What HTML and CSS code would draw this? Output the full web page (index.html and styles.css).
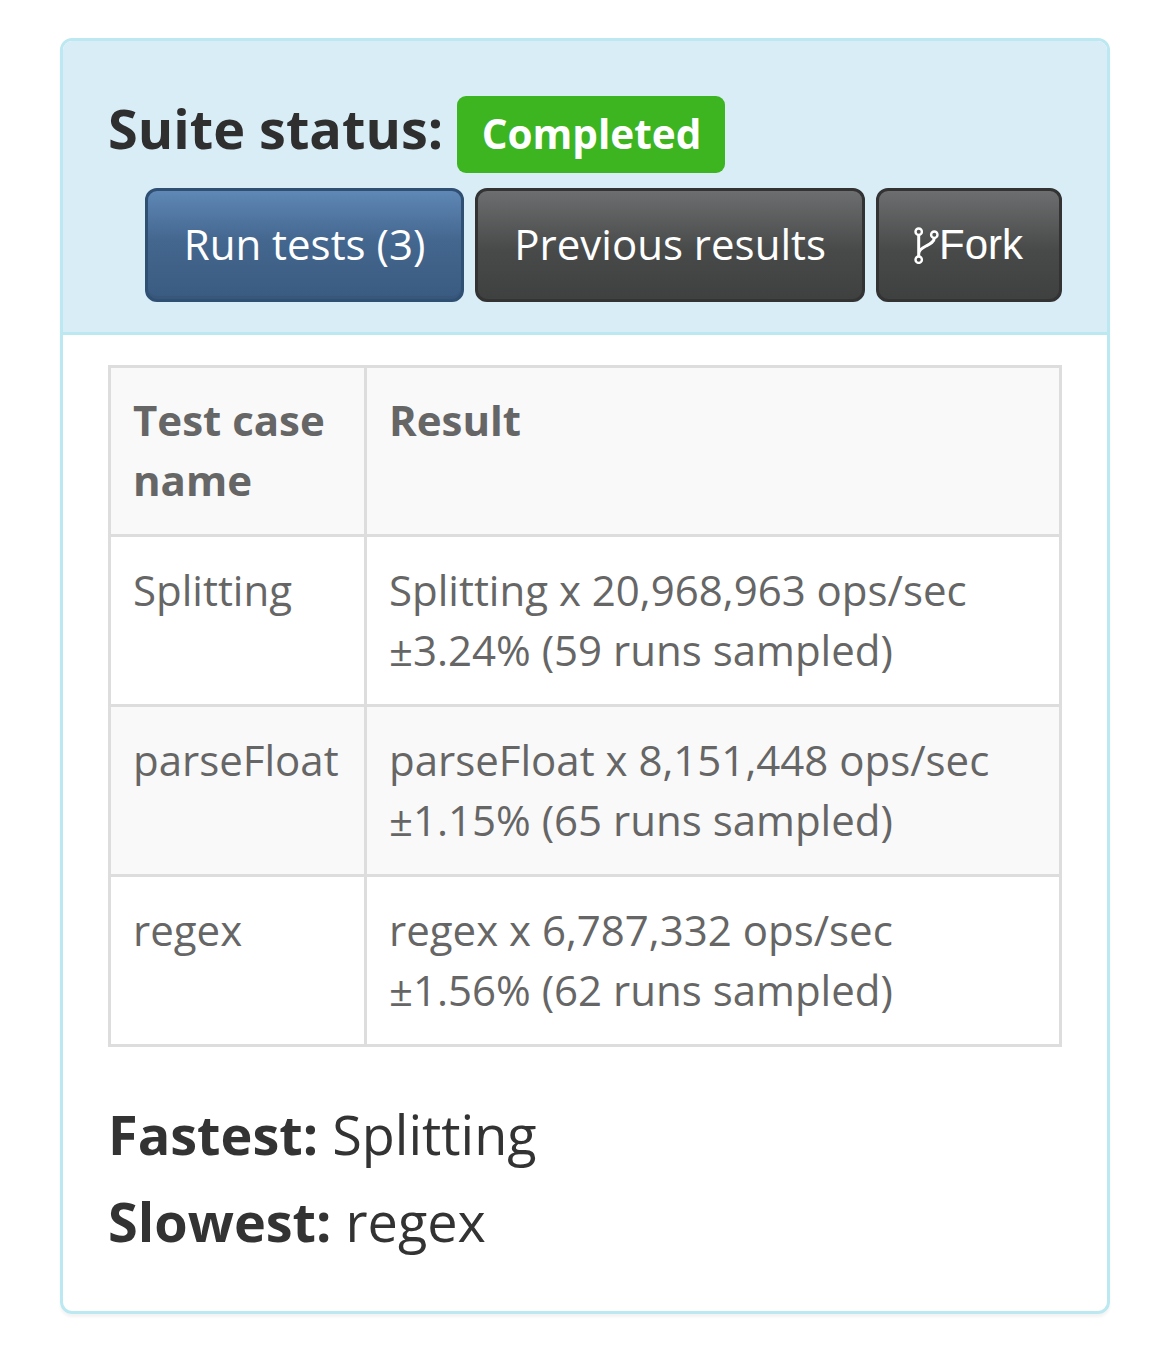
FILE: index.html
```html
<!DOCTYPE html>
<html lang="en">
<head>
<meta charset="utf-8">
<title>Suite status</title>
<link rel="stylesheet" href="styles.css">
</head>
<body>
<div class="panel">
  <div class="panel-heading">
    <h3 class="status"><span class="status-text">Suite status:</span> <span class="label">Completed</span></h3>
    <div class="actions">
      <button class="btn btn-primary"><span class="btn-text">Run tests (3)</span></button>
      <button class="btn btn-dark"><span class="btn-text">Previous results</span></button>
      <button class="btn btn-dark btn-fork"><svg class="fork-icon" viewBox="0 0 25 38" width="25" height="38" aria-hidden="true"><g fill="none" stroke="#fff"><g stroke-width="2.400"><circle cx="4.700" cy="5.700" r="3.200"/><circle cx="20.300" cy="8.700" r="3.200"/><circle cx="4.700" cy="33.700" r="3.200"/></g><path stroke-width="3" d="M4.700 9V30.500M20.300 12C20.300 16 16 18 12 20C8 22 4.700 24 4.700 28"/></g></svg><span>Fork</span></button>
    </div>
  </div>
  <div class="panel-body">
    <table class="results">
      <thead>
        <tr><th class="col-name">Test case name</th><th>Result</th></tr>
      </thead>
      <tbody>
        <tr><td>Splitting</td><td>Splitting x 20,968,963 ops/sec ±3.24% (59 runs sampled)</td></tr>
        <tr><td>parseFloat</td><td>parseFloat x 8,151,448 ops/sec ±1.15% (65 runs sampled)</td></tr>
        <tr><td>regex</td><td>regex x 6,787,332 ops/sec ±1.56% (62 runs sampled)</td></tr>
      </tbody>
    </table>
    <div class="summary">
      <p><strong>Fastest:</strong> Splitting</p>
      <p><strong>Slowest:</strong> regex</p>
    </div>
  </div>
</div>
</body>
</html>
```
FILE: styles.css
```css
* { box-sizing: border-box; }
html, body { margin: 0; background: #fff; }
body {
  padding: 38px 60px 43px;
  font-family: "Open Sans", sans-serif;
  color: #333;
}
.panel {
  border: 3px solid #bce8f1;
  border-radius: 12px;
  box-shadow: 0 3px 3px rgba(0,0,0,.05);
  overflow: hidden;
}
.panel-heading {
  background: #d9edf7;
  border-bottom: 3px solid #bce8f1;
  padding: 55px 45px 30px;
}
.status {
  margin: 0;
  height: 92px;
  font-size: 54px;
  line-height: 64px;
  font-weight: 700;
  color: #2f2f2f;
  display: flex;
  align-items: flex-start;
  gap: 14px;
}
.label {
  background: #3cb521;
  color: #fff;
  font-size: 40.500px;
  line-height: 75px;
  height: 77px;
  width: 268px;
  border-radius: 9px;
  padding: 0 0 0 24.500px;
  display: block;
}
.actions {
  display: flex;
  justify-content: flex-end;
  gap: 11px;
}
.btn {
  height: 114px;
  padding: 0 36px;
  font-family: inherit;
  font-size: 42px;
  color: #fff;
  border-radius: 12px;
  display: flex;
  align-items: center;
}
.btn-text { margin-bottom: 4px; }
.btn-primary {
  border: 3px solid #2f4f73;
  background: linear-gradient(#5f88b6, #44678f 45%, #3a5b81);
  box-shadow: inset 0 -3px 0 rgba(0,0,0,.05);
}
.btn-dark {
  border: 3px solid #333;
  background: linear-gradient(#6d6e6f, #484a4a 55%, #3f4140);
}
.btn-fork {
  padding: 0 36px 0 35px;
  font-family: "Liberation Sans", Arial, sans-serif;
}
.fork-icon { display: block; }
.panel-body { padding: 30px 45px 46px; }
.results {
  width: 100%;
  border-collapse: collapse;
  table-layout: fixed;
  border: 3px solid #ddd;
  font-size: 42px;
  line-height: 60px;
  color: #666;
}
.results th, .results td {
  border: 3px solid #ddd;
  text-align: left;
  vertical-align: top;
}
.results th { padding: 22px 24px 24px 22px; font-weight: 700; }
.results td { padding: 23px 24px 24px 22px; }
.col-name { width: 256px; }
.results thead tr, .results tbody tr:nth-child(even) { background: #f9f9f9; }
.summary { margin-top: 44px; }
.summary p {
  margin: 0;
  font-size: 54px;
  line-height: 87px;
  color: #333;
}
```
